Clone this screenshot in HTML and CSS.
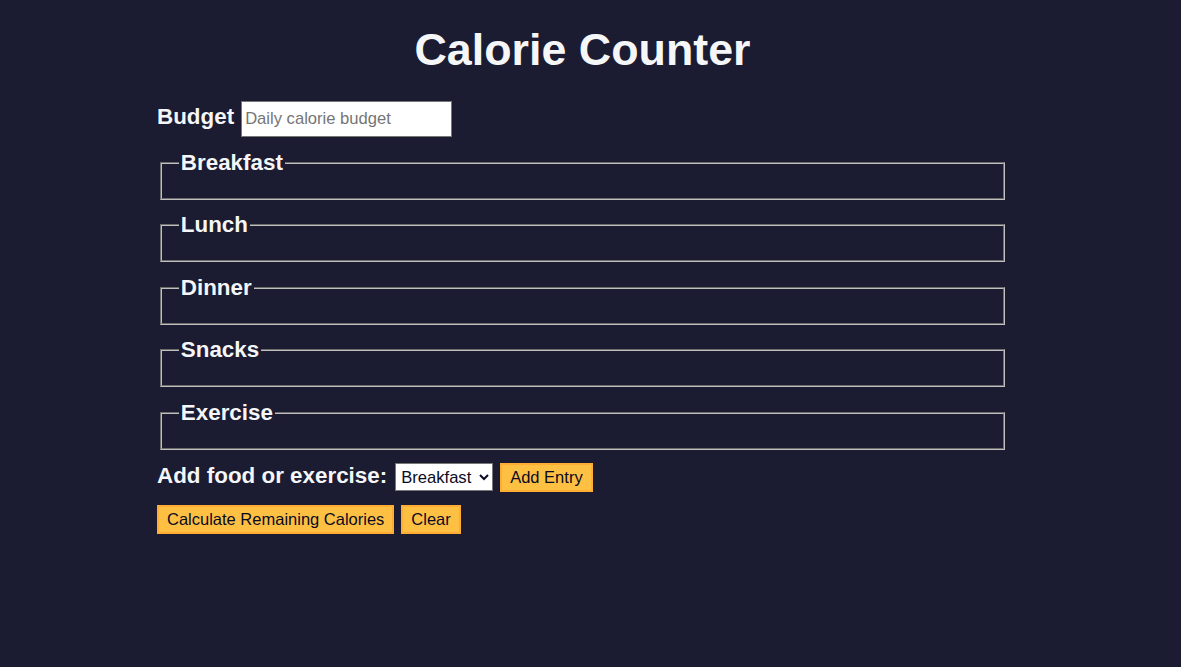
FILE: index.html
```html
<!DOCTYPE html>
<html lang="en">
<head>
<meta charset="utf-8">
<title>Calorie Counter</title>
<link rel="stylesheet" href="styles.css">
</head>
<body>
<main class="container">
  <h1 class="title">Calorie Counter</h1>
  <form class="calorie-form">
    <div class="row budget-row">
      <label for="budget" class="field-label">Budget</label>
      <input type="number" id="budget" class="budget-input" placeholder="Daily calorie budget">
    </div>
    <fieldset class="meal"><legend>Breakfast</legend><div class="entries"></div></fieldset>
    <fieldset class="meal"><legend>Lunch</legend><div class="entries"></div></fieldset>
    <fieldset class="meal"><legend>Dinner</legend><div class="entries"></div></fieldset>
    <fieldset class="meal"><legend>Snacks</legend><div class="entries"></div></fieldset>
    <fieldset class="meal"><legend>Exercise</legend><div class="entries"></div></fieldset>
    <div class="row controls">
      <label for="entry-dropdown" class="field-label controls-label">Add food or exercise:</label>
      <select id="entry-dropdown" class="entry-select">
        <option>Breakfast</option>
        <option>Lunch</option>
        <option>Dinner</option>
        <option>Snacks</option>
        <option>Exercise</option>
      </select>
      <button type="button" class="btn">Add Entry</button>
    </div>
    <div class="row actions">
      <button type="button" class="btn">Calculate Remaining Calories</button>
      <button type="button" class="btn">Clear</button>
    </div>
  </form>
</main>
</body>
</html>
```

FILE: styles.css
```css
:root {
  --light-grey: #f5f6f7;
  --dark-blue: #1b1b32;
  --gold: #fec043;
  --gold-shadow: #feac32;
  --ink: #0a0a23;
}

html, body {
  margin: 0;
  padding: 0;
}

body {
  background-color: var(--dark-blue);
  color: var(--light-grey);
  font-family: "Liberation Sans", Arial, sans-serif;
  font-size: 22.4px;
  min-height: 667px;
}

.container {
  width: 851px;
  margin-left: 157px;
}

.title {
  text-align: center;
  font-size: 44.8px;
  font-weight: bold;
  margin: 24px 0 26px;
}

.calorie-form {
  display: flex;
  flex-direction: column;
  gap: 12.75px;
}

.row {
  display: flex;
  align-items: baseline;
  gap: 7px;
}

.actions {
  margin-top: 1px;
}

.field-label {
  font-weight: bold;
}

.controls-label {
  margin-right: 1px;
}

.budget-input {
  box-sizing: border-box;
  width: 211px;
  height: 36px;
  padding: 0 3px;
  font-family: "Liberation Sans", Arial, sans-serif;
  font-size: 16.6px;
  color: var(--ink);
  background: #fff;
  border: 1px solid #767676;
}

.budget-input::placeholder {
  color: #757575;
}

.meal {
  margin: 0 3px;
  padding: 0.35em 0.75em 0.625em;
  border: 2px groove #c0c0c0;
}

.meal legend {
  font-weight: bold;
  padding: 0 2px;
}

.entry-select {
  box-sizing: border-box;
  width: 98px;
  height: 28px;
  padding: 0 1px;
  font-family: "Liberation Sans", Arial, sans-serif;
  font-size: 16.6px;
  color: var(--ink);
  background: #fff;
  border: 1px solid #767676;
  border-radius: 0;
}

.btn {
  box-sizing: border-box;
  height: 29px;
  padding: 0 8px;
  font-family: "Liberation Sans", Arial, sans-serif;
  font-size: 16.5px;
  color: var(--ink);
  background-color: var(--gold);
  border: 2px solid var(--gold-shadow);
  border-radius: 0;
  cursor: pointer;
}
```
